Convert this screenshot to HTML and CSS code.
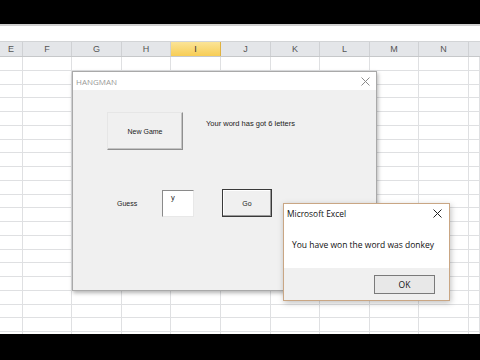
FILE: index.html
```html
<!DOCTYPE html>
<html lang="en">

<head>
	<meta charset="UTF-8">
	<meta name="viewport" content="width=device-width, initial-scale=1.0">
	<title>Hangman</title>
	<link rel="stylesheet" href="styles.css">
</head>

<body>
	<div class="screen">
		<div class="black-bar"></div>
		<div class="formula-bar"></div>

		<div class="col-heads">
			<div class="col w23">E</div>
			<div class="col w49">F</div>
			<div class="col w50">G</div>
			<div class="col w49">H</div>
			<div class="col w50 selected">I</div>
			<div class="col w50">J</div>
			<div class="col w49">K</div>
			<div class="col w50">L</div>
			<div class="col w49">M</div>
			<div class="col w50">N</div>
			<div class="col rest"></div>
		</div>

		<div class="sheet">
			<div class="cells w23"></div>
			<div class="cells w49"></div>
			<div class="cells w50"></div>
			<div class="cells w49"></div>
			<div class="cells w50"></div>
			<div class="cells w50"></div>
			<div class="cells w49"></div>
			<div class="cells w50"></div>
			<div class="cells w49"></div>
			<div class="cells w50"></div>
			<div class="cells rest"></div>
		</div>

		<div class="black-bar bottom"></div>

		<!-- userform -->
		<div class="userform">
			<div class="uf-title">
				<span>HANGMAN</span>
				<svg class="uf-close" width="9" height="9" viewBox="0 0 9 9">
					<path d="M0.5 0.5 L8.5 8.5 M8.5 0.5 L0.5 8.5" stroke="#8a8a8a" stroke-width="1" fill="none" />
				</svg>
			</div>
			<div class="uf-body">
				<div class="uf-row">
					<button class="btn btn-new">New Game</button>
					<span class="uf-label word-info">Your word has got 6 letters</span>
				</div>
				<div class="uf-row guess-row">
					<span class="uf-label guess-label">Guess</span>
					<div class="textbox">y</div>
					<button class="btn btn-go">Go</button>
				</div>
			</div>
		</div>

		<!-- msgbox -->
		<div class="msgbox">
			<div class="mb-main">
				<div class="mb-title">
					<span>Microsoft Excel</span>
					<svg class="mb-close" width="9" height="9" viewBox="0 0 9 9">
						<path d="M0.5 0.5 L8.5 8.5 M8.5 0.5 L0.5 8.5" stroke="#222" stroke-width="1" fill="none" />
					</svg>
				</div>
				<div class="mb-text">You have won the word was donkey</div>
			</div>
			<div class="mb-footer">
				<button class="btn btn-ok">OK</button>
			</div>
		</div>
	</div>
</body>

</html>
```

FILE: styles.css
```css
*,
*::before,
*::after {
	box-sizing: border-box;
}

html, body {
	margin: 0;
	width: 480px;
	height: 360px;
	overflow: hidden;
	font-family: "Liberation Sans", Arial, sans-serif;
}

.screen {
	position: relative;
	width: 480px;
	height: 360px;
	display: flex;
	flex-direction: column;
	background: #fff;
}

.black-bar {
	height: 24px;
	background: #000;
}

.black-bar.bottom {
	height: 26px;
}

.formula-bar {
	height: 17px;
	border-top: 2px solid #cfcfcf;
	background: #fff;
}

/* column headers */
.col-heads {
	display: flex;
	height: 16px;
	background: #e4e6e9;
	border-top: 1px solid #d2d4d6;
	border-bottom: 1px solid #c6c8ca;
}

.col {
	display: flex;
	align-items: center;
	justify-content: center;
	font-size: 9px;
	color: #555;
	border-right: 1px solid #cfd1d4;
}

.col.selected {
	background: linear-gradient(#fbe497, #f7cd55);
	border-right-color: #e0b240;
	color: #333;
}

.w23 { width: 23px; }
.w49 { width: 49px; }
.w50 { width: 50px; }
.rest { flex: 1; border-right: none; }

/* grid */
.sheet {
	display: flex;
	height: 277px;
}

.cells {
	height: 100%;
	border-right: 1px solid #dfe0e2;
	background-image: repeating-linear-gradient(to bottom, transparent 0, transparent 12.75px, #dfe0e2 12.75px, #dfe0e2 13.75px);
}

/* userform */
.userform {
	position: absolute;
	left: 72px;
	top: 71px;
	width: 305px;
	height: 220px;
	background: #f0f0f0;
	border: 1px solid #a9a9a9;
	box-shadow: 1px 2px 4px rgba(0, 0, 0, 0.3);
}

.uf-title {
	display: flex;
	justify-content: space-between;
	align-items: center;
	height: 18px;
	padding: 0 6px 0 3px;
	background: #fff;
	font-family: "Open Sans", sans-serif;
	font-size: 8px;
	color: #999;
}

.uf-body {
	padding: 22px 0 0 34px;
}

.uf-row {
	display: flex;
	align-items: center;
}

.uf-label {
	font-size: 7.5px;
	color: #222;
}

.word-info {
	margin-left: 23px;
	margin-top: -16px;
}

.guess-row {
	margin-top: 39px;
}

.guess-label {
	margin-left: 10px;
	width: 45px;
	font-size: 7px;
}

.btn {
	font-family: "Liberation Sans", Arial, sans-serif;
	font-size: 7px;
	color: #222;
	background: #f0f0f0;
	padding: 0;
	cursor: pointer;
}

.btn-new {
	width: 76px;
	height: 38px;
	border: 1px solid;
	border-color: #e6e6e6 #8f8f8f #8f8f8f #e6e6e6;
	box-shadow: inset -1px -1px 0 #c4c4c4;
}

.textbox {
	width: 32px;
	height: 27px;
	background: #fff;
	border: 1px solid;
	border-color: #8a8a8a #e8e8e8 #e8e8e8 #8a8a8a;
	font-size: 7.5px;
	color: #222;
	padding: 2px 0 0 8px;
}

.btn-go {
	margin-left: 28px;
	width: 50px;
	height: 28px;
	border: 1px solid #3a3a3a;
	box-shadow: inset -1px -1px 0 #9a9a9a, inset 1px 1px 0 #fff;
}

/* msgbox */
.msgbox {
	position: absolute;
	left: 283px;
	top: 203px;
	width: 167px;
	height: 98px;
	display: flex;
	flex-direction: column;
	background: #fff;
	border: 1px solid #c9a684;
	box-shadow: 1px 2px 6px rgba(0, 0, 0, 0.25);
	font-family: "Open Sans", "Noto Sans", sans-serif;
	color: #111;
}

.mb-main {
	height: 64px;
}

.mb-title {
	display: flex;
	justify-content: space-between;
	align-items: center;
	height: 19px;
	padding: 0 7px 0 3px;
	font-size: 8.4px;
}

.mb-text {
	padding: 16px 0 0 8px;
	font-size: 8.5px;
}

.mb-footer {
	flex: 1;
	display: flex;
	justify-content: flex-end;
	align-items: center;
	padding-right: 14px;
	background: #f0f0f0;
}

.btn-ok {
	width: 61px;
	height: 19px;
	border: 1px solid #7a7a7a;
	background: #e8e8e8;
	font-family: "Open Sans", "Noto Sans", sans-serif;
	font-size: 8.5px;
	color: #111;
}
```
